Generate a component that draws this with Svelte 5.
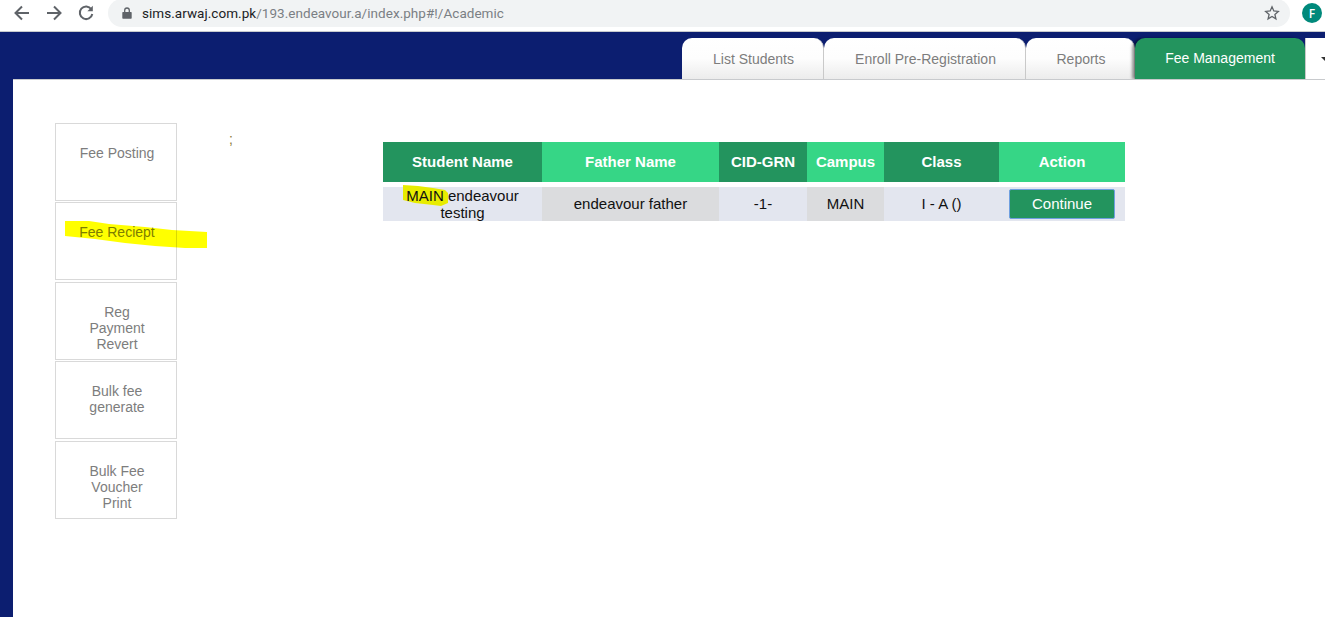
<script>
	const tabs = [
		{ label: 'List Students', width: 142 },
		{ label: 'Enroll Pre-Registration', width: 202 },
		{ label: 'Reports', width: 109 }
	];
	const sideLinks = [
		{ lines: ['Fee Posting'] },
		{ lines: ['Fee Reciept'] },
		{ lines: ['Reg', 'Payment', 'Revert'] },
		{ lines: ['Bulk fee', 'generate'] },
		{ lines: ['Bulk Fee', 'Voucher', 'Print'] }
	];
	const columns = [
		{ title: 'Student Name', width: 159 },
		{ title: 'Father Name', width: 177 },
		{ title: 'CID-GRN', width: 88 },
		{ title: 'Campus', width: 77 },
		{ title: 'Class', width: 115 },
		{ title: 'Action', width: 126 }
	];
</script>

<div class="browser">
	<svg class="nav" width="20" height="20" viewBox="0 0 20 20" aria-hidden="true">
		<path d="M17 10H4M10 3.500 3.500 10l6.500 6.500" />
	</svg>
	<svg class="nav" width="20" height="20" viewBox="0 0 20 20" aria-hidden="true">
		<path d="M3 10h13M10 3.500 16.500 10 10 16.500" />
	</svg>
	<svg class="nav" width="20" height="20" viewBox="0 0 20 20" aria-hidden="true">
		<path d="M15.300 6.200A6.300 6.300 0 1 0 16.300 11" />
		<path class="solid" d="M16.800 2.800v5.400h-5.400z" />
	</svg>
	<div class="omnibox">
		<svg class="lock" width="10" height="12" viewBox="0 0 10 12" aria-hidden="true">
			<path d="M1 5h8a.7.7 0 0 1 .7.7v5.300a.7.7 0 0 1-.7.7H1a.7.7 0 0 1-.7-.7V5.700A.7.7 0 0 1 1 5z" />
			<path class="shackle" d="M2.700 5V3.300a2.300 2.300 0 0 1 4.600 0V5" />
		</svg>
		<span class="url"><b>sims.arwaj.com.pk</b>/193.endeavour.a/index.php#!/Academic</span>
		<svg class="star" width="16" height="16" viewBox="0 0 16 16" aria-hidden="true">
			<path d="M8 1.800 9.800 6l4.500.4-3.400 3 1 4.400L8 11.500l-3.900 2.300 1-4.400-3.400-3L6.200 6z" />
		</svg>
	</div>
	<div class="avatar">F</div>
</div>

<header class="topbar">
	<nav class="tabs">
		{#each tabs as tab}
			<a class="tab" href="#top" style="width: {tab.width}px">{tab.label}</a>
		{/each}
		<a class="tab active" href="#top">Fee Management</a>
		<div class="more"><span class="caret"></span></div>
	</nav>
</header>

<main class="page">
	<aside class="side">
		{#each sideLinks as link, i}
			<a class="side-link" href="#top">
				{#each link.lines as line}
					<span>{line}</span>
				{/each}
				{#if i === 1}
					<svg class="marker" width="143" height="28" viewBox="0 0 143 28" aria-hidden="true">
						<path d="M0 0H24L44 3 80 6 107 9 142 11V27H120L90 25 60 22 30 18 0 15z" />
					</svg>
				{/if}
			</a>
		{/each}
	</aside>

	<div class="semi">;</div>

	<table class="students">
		<colgroup>
			{#each columns as col}
				<col style="width: {col.width}px" />
			{/each}
		</colgroup>
		<thead>
			<tr>
				{#each columns as col}
					<th>{col.title}</th>
				{/each}
			</tr>
		</thead>
		<tbody>
			<tr class="spacer"><td colspan="6"></td></tr>
			<tr class="row">
				<td class="name">
					<svg class="marker-main" width="46" height="22" viewBox="0 0 46 22" aria-hidden="true">
						<path d="M0 0 15 1 30 3 42 5 45 8V18L38 21 30 20 12 18 0 15z" />
					</svg>
					<span class="over">MAIN endeavour testing</span>
				</td>
				<td>endeavour father</td>
				<td>-1-</td>
				<td>MAIN</td>
				<td>I - A ()</td>
				<td><button class="continue">Continue</button></td>
			</tr>
		</tbody>
	</table>
</main>

<style>
	:global(body) {
		margin: 0;
		background: #fff;
		overflow: hidden;
	}

	.browser {
		height: 32px;
		box-sizing: border-box;
		padding: 0 0 5px 12px;
		border-bottom: 1px solid #c8cacd;
		background: #fff;
		display: flex;
		align-items: center;
		gap: 12px;
		overflow: hidden;
		font-family: 'Open Sans', 'Liberation Sans', sans-serif;
	}

	.nav {
		flex: none;
		fill: none;
		stroke: #5f6368;
		stroke-width: 2;
	}

	.nav .solid {
		fill: #5f6368;
		stroke: none;
	}

	.omnibox {
		flex: none;
		width: 1182px;
		height: 28px;
		border-radius: 14px;
		background: #f1f3f4;
		display: flex;
		align-items: center;
		padding-left: 14px;
		box-sizing: border-box;
	}

	.lock {
		fill: #5f6368;
		margin-right: 10px;
	}

	.lock .shackle {
		fill: none;
		stroke: #5f6368;
		stroke-width: 1.300;
	}

	.url {
		font-family: 'Roboto', 'Liberation Sans', sans-serif;
		font-size: 13.500px;
		color: #7b7f84;
		letter-spacing: 0.04px;
	}

	.url b {
		font-weight: 400;
		color: #202124;
	}

	.star {
		margin-left: auto;
		margin-right: 10px;
		fill: none;
		stroke: #5f6368;
		stroke-width: 1.300;
	}

	.avatar {
		flex: none;
		width: 20px;
		height: 20px;
		border-radius: 50%;
		background: #00897b;
		color: #fff;
		font-size: 12px;
		font-weight: 600;
		display: flex;
		align-items: center;
		justify-content: center;
	}

	.topbar {
		height: 47px;
		background: #0c1e70;
		display: flex;
		justify-content: flex-end;
		align-items: flex-end;
		font-family: 'Liberation Sans', Arial, sans-serif;
	}

	.tabs {
		display: flex;
		align-items: flex-end;
	}

	.tab {
		height: 41px;
		box-sizing: border-box;
		padding-left: 2px;
		display: flex;
		align-items: center;
		justify-content: center;
		font-size: 14px;
		color: #7d7d7d;
		text-decoration: none;
		background: linear-gradient(#ffffff, #fdfdfd 50%, #ececec);
		border-radius: 10px 10px 0 0;
		border-right: 1px solid #c9c9c9;
	}

	.tab.active {
		width: 170px;
		background: #23945e;
		color: #fff;
		border-right: 0;
		padding: 0 0 2px;
		box-shadow: -3px 0 3px rgba(0, 0, 0, 0.4);
	}

	.more {
		width: 20px;
		height: 41px;
		box-sizing: border-box;
		border-left: 1px solid #c9c9c9;
		background: #fff;
		position: relative;
	}

	.caret {
		position: absolute;
		left: 15px;
		top: 19px;
		border: 4px solid transparent;
		border-top-color: #333;
		border-bottom: 0;
	}

	.page {
		position: relative;
		height: 538px;
		margin-left: 13px;
		background: #fff;
		border-top: 1px solid #c8cacd;
		box-sizing: border-box;
		padding: 43px 0 0 42px;
		display: flex;
		align-items: flex-start;
		font-family: 'Liberation Sans', Arial, sans-serif;
	}

	.page::before {
		content: '';
		position: fixed;
		left: 0;
		top: 79px;
		bottom: 0;
		width: 13px;
		background: #0c1e70;
	}

	.side {
		flex: none;
		width: 122px;
		display: flex;
		flex-direction: column;
		gap: 1.400px;
	}

	.side-link {
		position: relative;
		height: 78px;
		box-sizing: border-box;
		border: 1px solid #d9d9d9;
		padding: 21px 0 0 2px;
		display: flex;
		flex-direction: column;
		align-items: center;
		font-size: 14px;
		line-height: 16px;
		color: #7d7d7d;
		text-decoration: none;
	}

	.side-link span {
		display: block;
		white-space: nowrap;
	}

	.marker {
		position: absolute;
		left: 9px;
		top: 18px;
		fill: #ffff00;
		mix-blend-mode: multiply;
	}

	.semi {
		flex: none;
		width: 0;
		margin-left: 52px;
		margin-top: 8px;
		font-size: 14px;
		line-height: 16px;
		color: #8a7a3a;
	}

	.students {
		margin-left: 154px;
		margin-top: 19px;
		width: 742px;
		table-layout: fixed;
		border-collapse: collapse;
		font-size: 15px;
		color: #111;
		text-align: center;
	}

	th {
		height: 38px;
		padding: 0 0 2px;
		color: #fff;
		font-size: 15px;
		font-weight: 700;
		background: #23945e;
	}

	th:nth-child(even) {
		background: #36d686;
	}

	.spacer td {
		height: 5px;
		padding: 0;
	}

	.row td {
		height: 33px;
		padding: 0 0 1px;
		background: #e3e6ef;
		line-height: 17px;
	}

	.row td:nth-child(2),
	.row td:nth-child(4) {
		background: #dbdcde;
	}

	.row td.name {
		position: relative;
		padding: 0;
	}

	.over {
		position: relative;
		display: block;
		padding: 0 20px;
	}

	.marker-main {
		position: absolute;
		left: 20px;
		top: -2px;
		fill: #e8ec00;
	}

	.continue {
		width: 106px;
		height: 30px;
		box-sizing: border-box;
		display: block;
		margin: 0 auto;
		padding: 0;
		border: 1px solid #6f9fe0;
		border-radius: 2px;
		background: #23945e;
		color: #fff;
		font-family: inherit;
		font-size: 15px;
	}
</style>
